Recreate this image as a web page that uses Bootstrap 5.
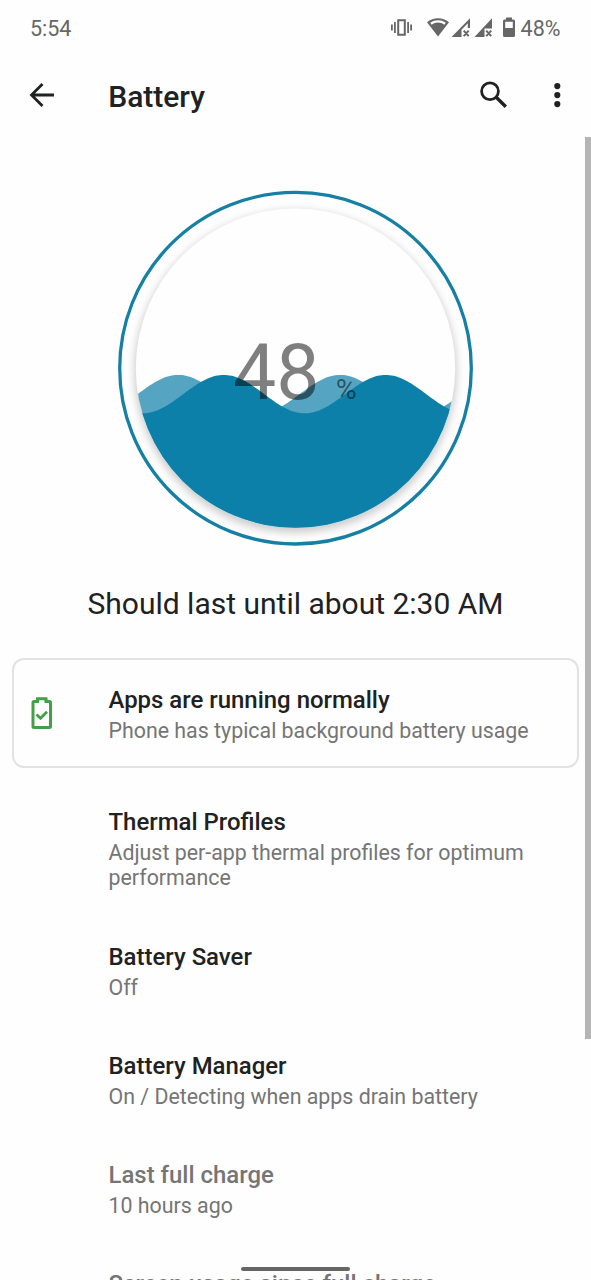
<!DOCTYPE html>
<html lang="en">
<head>
  <meta charset="UTF-8">
  <meta name="viewport" content="width=device-width, initial-scale=1.0">
  <title>Battery</title>
  <link href="https://cdn.jsdelivr.net/npm/bootstrap@5.3.3/dist/css/bootstrap.min.css" rel="stylesheet">
  <style>
    body {
      font-family: Roboto, "Liberation Sans", sans-serif;
      background: #fefefe;
      color: #202122;
    }
    .screen {
      height: 1280px;
    }
    .status-bar {
      height: 56px;
      padding: 0 30.5px 0 30px;
      font-size: 21.5px;
      line-height: 57px;
      color: #666;
    }
    .status-icons {
      gap: 4.5px;
    }
    .app-bar {
      height: 81px;
      padding: 0 24px 4px 28px;
    }
    .app-title {
      font-size: 30px;
      line-height: 36px;
      margin: 4px 0 0 52.2px;
    }
    .content-area {
      padding-top: 50px;
    }
    .gauge {
      width: 362px;
      height: 362px;
    }
    .estimate {
      font-size: 30px;
      line-height: 36px;
      margin: 37px 0 0;
    }
    .tip-card {
      margin: 36px 12px 0;
      border: 2px solid #e2e2e2;
      border-radius: 12px;
      height: 110px;
      padding-top: 4px;
    }
    .tip-icon {
      width: 94.5px;
      padding: 0 0 4px 16px;
    }
    .pref-list {
      padding: 14px 40px 0 108.5px;
    }
    .pref {
      padding: 26px 0 25.8px;
    }
    .pref-title {
      font-size: 23.95px;
      line-height: 29px;
      font-weight: 500;
    }
    .pref-text {
      font-size: 21.36px;
      line-height: 25.4px;
      margin-top: 3px;
      color: #757575;
    }
    .pref-off .pref-title {
      color: #757575;
    }
    .scroll-thumb {
      top: 137px;
      right: 0;
      width: 6px;
      height: 902px;
      background: #b5b5b5;
    }
    .home-handle {
      bottom: 9px;
      left: 241px;
      width: 109px;
      height: 4px;
      border-radius: 2px;
      background: #666;
    }
  </style>
</head>
<body>

<div class="screen position-relative overflow-hidden">

  <div class="status-bar d-flex justify-content-between">
    <span>5:54</span>
    <div class="status-icons d-flex align-items-center">
      <!-- vibrate, wifi, two signals, battery -->
      <svg width="126" height="26" viewBox="390 15 126 26" fill="#666">
        <path d="M398.2 20.2h6.6v14.6h-6.6z" fill="none" stroke="#666" stroke-width="2"/>
        <path d="M391 24.5h1.8v6H391zM394 22h1.8v11H394zM407.2 22h1.8v11h-1.8zM410.2 24.5h1.8v6h-1.8z"/>
        <path fill-rule="evenodd" d="M427 22.2C433.2 16.8 442.8 16.8 449 22.2L438 36.500zM430.200 22.700L431.700 24.700C435.500 21.900 440.500 21.900 444.300 24.700L445.800 22.700C441.200 19.400 434.800 19.400 430.200 22.700z"/>
        <path fill-rule="evenodd" d="M451.500 37L470 18.300V28h-2.200V23.300L461.500 29.700V37z"/>
        <path d="M474.500 37L492 18.300V28.500H484.500V37z"/>
        <path d="M463.700 30.700l5 5.500m0-5.500l-5 5.500M486.200 30.700l5 5.500m0-5.500l-5 5.500" stroke="#666" stroke-width="2" fill="none"/>
        <path fill-rule="evenodd" d="M506 17.500h6v2h1.500q1.500 0 1.500 1.500v14.500q0 1.500-1.500 1.500h-9q-1.500 0-1.500-1.500V21q0-1.500 1.500-1.500h1.500zM505.200 21.700V28h7.600V21.700z"/>
      </svg>
      <span>48%</span>
    </div>
  </div>

  <div class="app-bar d-flex align-items-center">
    <svg width="28" height="28" viewBox="0 0 28 28" fill="none" stroke="#202122" stroke-width="2.800">
      <path d="M26 14H4M14.500 3L3.500 14l11 11"/>
    </svg>
    <h1 class="app-title fw-medium me-auto">Battery</h1>
    <svg width="90" height="32" viewBox="477 78.500 90 32">
      <circle cx="490" cy="90.700" r="8.400" fill="none" stroke="#202122" stroke-width="2.800"/>
      <path d="M496 96.500l9.800 9.800" stroke="#202122" stroke-width="3.400"/>
      <circle cx="557.300" cy="85.600" r="3.100" fill="#202122"/>
      <circle cx="557.300" cy="94.600" r="3.100" fill="#202122"/>
      <circle cx="557.300" cy="103.600" r="3.100" fill="#202122"/>
    </svg>
  </div>

  <main class="content-area">
    <div class="text-center">
      <svg class="gauge d-block mx-auto" viewBox="115.300 187.300 362 362">
        <defs>
          <clipPath id="bowl"><circle cx="295.800" cy="368.300" r="159.700"/></clipPath>
          <filter id="soft" x="-10%" y="-10%" width="120%" height="120%">
            <feGaussianBlur stdDeviation="4.500"/>
          </filter>
        </defs>
        <circle cx="295.800" cy="372" r="161" fill="#000" opacity=".2" filter="url(#soft)"/>
        <circle cx="295.800" cy="368.500" r="159.700" fill="#fefefe"/>
        <circle cx="295.800" cy="368.500" r="175.800" fill="none" stroke="#1580a4" stroke-width="3.300"/>
        <g clip-path="url(#bowl)">
          <path id="wave-back" fill="#55a5c2"/>
          <path id="wave-front" fill="#0d80a9"/>
        </g>
        <text x="233.200" y="399.500" font-size="77" fill-opacity=".5">48</text>
        <text x="336" y="399" font-size="28.500" fill-opacity=".5">%</text>
      </svg>
    </div>

    <p class="estimate text-center">Should last until about 2:30 AM</p>

    <div class="tip-card d-flex align-items-center">
      <div class="tip-icon">
        <svg class="d-block" width="24" height="34" viewBox="0 0 24 34" fill="none" stroke="#43a047">
          <path d="M7.500 5.500V2.700h8.500v2.800h3.500q1 0 1 1V30.500q0 1-1 1H4q-1 0-1-1V6.500q0-1 1-1z" stroke-width="3"/>
          <path d="M6.500 18.500l4 3.700 6.500-6.500" stroke-width="2.800"/>
        </svg>
      </div>
      <div>
        <div class="pref-title">Apps are running normally</div>
        <div class="pref-text">Phone has typical background battery usage</div>
      </div>
    </div>

    <div class="pref-list">
      <div class="pref">
        <div class="pref-title">Thermal Profiles</div>
        <div class="pref-text">Adjust per-app thermal profiles for optimum performance</div>
      </div>
      <div class="pref">
        <div class="pref-title">Battery Saver</div>
        <div class="pref-text">Off</div>
      </div>
      <div class="pref">
        <div class="pref-title">Battery Manager</div>
        <div class="pref-text">On / Detecting when apps drain battery</div>
      </div>
      <div class="pref pref-off">
        <div class="pref-title">Last full charge</div>
        <div class="pref-text">10 hours ago</div>
      </div>
      <div class="pref pref-off">
        <div class="pref-title">Screen usage since full charge</div>
      </div>
    </div>
  </main>

  <div class="scroll-thumb position-absolute"></div>
  <div class="home-handle position-absolute"></div>
</div>

<script src="https://cdn.jsdelivr.net/npm/bootstrap@5.3.3/dist/js/bootstrap.bundle.min.js"></script>
<script>
  // sine wave with a crest at the given x, closed along the bottom
  function wave(crest) {
    let d = 'M130 540';
    for (let x = 130; x <= 460; x += 2) {
      d += ' L' + x + ' ' + (394.4 - 19.2 * Math.cos((x - crest) / 162 * 2 * Math.PI)).toFixed(2);
    }
    return d + ' L460 540Z';
  }
  document.getElementById('wave-back').setAttribute('d', wave(178.5));
  document.getElementById('wave-front').setAttribute('d', wave(224));
</script>
</body>
</html>
